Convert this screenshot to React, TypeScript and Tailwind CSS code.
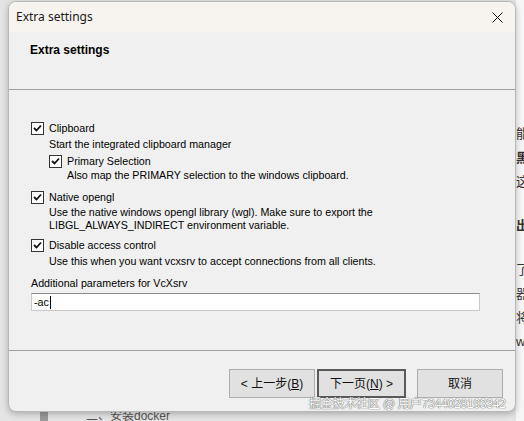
import type { ReactNode } from 'react'

// Small classic Win32 checkbox with a tick
function CheckBox({ checked = true }: { checked?: boolean }) {
  return (
    <span className="inline-flex h-[13px] w-[13px] shrink-0 items-center justify-center border border-[#333] bg-white">
      {checked && (
        <svg width="9" height="9" viewBox="0 0 9 9">
          <path d="M1 4 L3.5 6.5 L8 1.5" fill="none" stroke="#111" strokeWidth="1.8" />
        </svg>
      )}
    </span>
  )
}

function Option({ label, children }: { label: string; children?: ReactNode }) {
  return (
    <div>
      <div className="flex h-[14px] items-center gap-[5px]">
        <CheckBox />
        <span>{label}</span>
      </div>
      <div className="ml-[18px]">{children}</div>
    </div>
  )
}

function WizardButton({ children, primary = false }: { children: ReactNode; primary?: boolean }) {
  return (
    <button
      className={`flex h-[29px] items-center justify-center bg-[#e1e1e1] text-[12px] text-[#111] ${
        primary ? 'w-[89px] border-2 border-[#5a5a5a]' : 'w-[86px] border border-[#adadad]'
      }`}
    >
      {children}
    </button>
  )
}

export default function App() {
  const ui = { fontFamily: '"Liberation Sans", "Noto Sans CJK SC", sans-serif' }

  return (
    <div className="relative h-[421px] w-[524px] overflow-hidden bg-[#e4e4e4]" style={ui}>
      {/* page behind the dialog */}
      <div className="absolute right-0 top-0 flex h-full w-[8px] flex-col bg-[#f6f6f6] pt-[122px] text-[13px] leading-[24px] text-[#333]">
        <span>能</span>
        <span className="font-bold">黑</span>
        <span>这</span>
        <span className="mt-[20px] font-bold">出</span>
        <span className="mt-[20px]">了</span>
        <span>器</span>
        <span>将</span>
        <span>w</span>
      </div>
      <div className="absolute bottom-0 left-[40px] h-[9px] w-[8px] bg-[#9a9a9a]" />
      <div className="absolute left-[86px] top-[407px] text-[12px] text-[#555]">二、安装docker</div>

      {/* dialog window */}
      <div className="absolute left-[8px] top-[1px] flex h-[411px] w-[508px] flex-col overflow-hidden rounded-[8px] border border-[#b8b8b8] bg-[#f0f0f0] shadow-[0_2px_6px_rgba(0,0,0,0.25)]">
        {/* title bar */}
        <div className="flex h-[30px] shrink-0 items-center justify-between bg-[#f7f4f0] pl-[7px] pr-[12px]">
          <span className="text-[12px] text-[#1a1a1a]" style={{ fontFamily: '"Noto Sans", sans-serif' }}>
            Extra settings
          </span>
          <svg width="11" height="11" viewBox="0 0 11 11">
            <path d="M0.5 0.5 L10.5 10.5 M10.5 0.5 L0.5 10.5" stroke="#111" strokeWidth="1" />
          </svg>
        </div>

        {/* wizard header */}
        <div className="h-[58px] shrink-0 border-b border-[#a0a0a0] pl-[21px] pt-[5px]">
          <span className="text-[12px] font-bold text-[#000]">Extra settings</span>
        </div>

        {/* page body */}
        <div className="flex-1 border-b border-[#a0a0a0] pl-[22px] pr-[28px] pt-[31px] text-[10.7px] leading-[13px] text-[#000]">
          <Option label="Clipboard">
            <div className="pt-[3px]">Start the integrated clipboard manager</div>
            <div className="pt-[3px]">
              <Option label="Primary Selection">
                <div className="pt-[1px]">Also map the PRIMARY selection to the windows clipboard.</div>
              </Option>
            </div>
          </Option>
          <div className="mt-[8px]">
            <Option label="Native opengl">
              <div className="pt-[2px]">Use the native windows opengl library (wgl). Make sure to export the</div>
              <div>LIBGL_ALWAYS_INDIRECT environment variable.</div>
            </Option>
          </div>
          <div className="mt-[6px]">
            <Option label="Disable access control">
              <div className="pt-[3px]">Use this when you want vcxsrv to accept connections from all clients.</div>
            </Option>
          </div>
          <div className="pt-[9px]">Additional parameters for VcXsrv</div>
          <div className="mt-[3px] flex h-[18px] w-[449px] items-center border border-[#c8c8c8] border-t-[#8a8a8a] bg-white pl-[2px]">
            <span>-ac</span>
            <span className="ml-[1px] h-[13px] w-px bg-black" />
          </div>
        </div>

        {/* button strip */}
        <div className="flex h-[60px] shrink-0 items-start justify-end pr-[12px] pt-[18px]">
          <div className="flex items-center">
            <WizardButton>
              &lt; 上一步(<span className="underline">B</span>)
            </WizardButton>
            <div className="ml-[2px]">
              <WizardButton primary>
                下一页(<span className="underline">N</span>) &gt;
              </WizardButton>
            </div>
            <div className="ml-[11px]">
              <WizardButton>取消</WizardButton>
            </div>
          </div>
        </div>
      </div>

      {/* site watermark */}
      <div
        className="absolute left-[309px] top-[395px] whitespace-nowrap text-[12px] tracking-[-0.2px] text-white"
        style={{ textShadow: '0 0 1px #555, 0 0 1px #555' }}
      >
        掘金技术社区 @ 用户7344028193342
      </div>
    </div>
  )
}
